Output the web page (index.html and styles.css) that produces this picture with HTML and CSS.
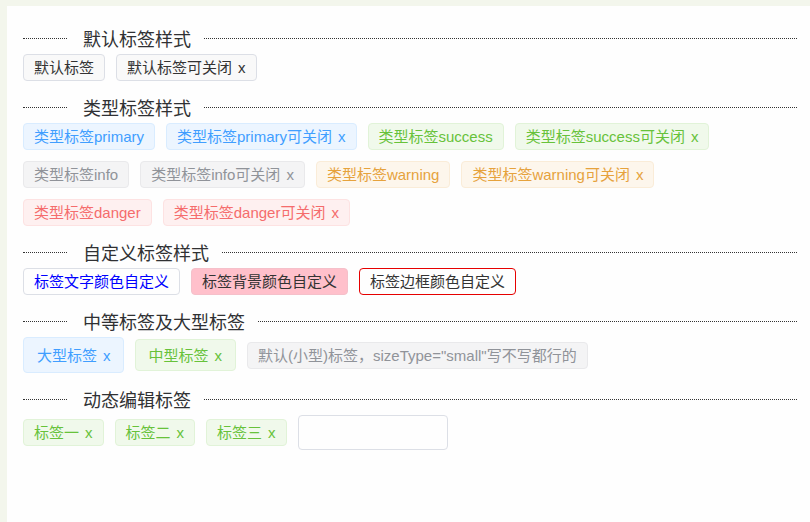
FILE: index.html
```html
<!DOCTYPE html>
<html lang="zh-CN">
<head>
  <meta charset="UTF-8" />
  <title>标签 Tag</title>
  <link rel="stylesheet" href="styles.css">
</head>
<body>

<div class="frame">
  <main class="page">

    <section class="block">
      <h2 class="divider"><span>默认标签样式</span></h2>
      <div class="tags">
        <span class="tag">默认标签</span>
        <span class="tag">默认标签可关闭<i class="close">x</i></span>
      </div>
    </section>

    <section class="block">
      <h2 class="divider"><span>类型标签样式</span></h2>
      <div class="tags">
        <span class="tag primary">类型标签primary</span>
        <span class="tag primary">类型标签primary可关闭<i class="close">x</i></span>
        <span class="tag success">类型标签success</span>
        <span class="tag success">类型标签success可关闭<i class="close">x</i></span>
        <span class="tag info">类型标签info</span>
        <span class="tag info">类型标签info可关闭<i class="close">x</i></span>
        <span class="tag warning">类型标签warning</span>
        <span class="tag warning">类型标签warning可关闭<i class="close">x</i></span>
        <span class="tag danger">类型标签danger</span>
        <span class="tag danger">类型标签danger可关闭<i class="close">x</i></span>
      </div>
    </section>

    <section class="block">
      <h2 class="divider"><span>自定义标签样式</span></h2>
      <div class="tags">
        <span class="tag custom-text">标签文字颜色自定义</span>
        <span class="tag custom-bg">标签背景颜色自定义</span>
        <span class="tag custom-border">标签边框颜色自定义</span>
      </div>
    </section>

    <section class="block">
      <h2 class="divider"><span>中等标签及大型标签</span></h2>
      <div class="tags">
        <span class="tag primary large">大型标签<i class="close">x</i></span>
        <span class="tag success medium">中型标签<i class="close">x</i></span>
        <span class="tag info">默认(小型)标签，sizeType="small"写不写都行的</span>
      </div>
    </section>

    <section class="block">
      <h2 class="divider"><span>动态编辑标签</span></h2>
      <div class="tags">
        <span class="tag success">标签一<i class="close">x</i></span>
        <span class="tag success">标签二<i class="close">x</i></span>
        <span class="tag success">标签三<i class="close">x</i></span>
        <input class="new-tag" type="text" />
      </div>
    </section>

  </main>
</div>

</body>
</html>
```

FILE: styles.css
```css
body {
  margin: 0;
  font-family: "Liberation Sans", "Noto Sans CJK SC", sans-serif;
  color: #333;
  background: #f3f6ec;
}

.frame {
  padding: 6px 0 0 7px;
  height: 516px;
}
.page {
  background: #fefefe;
  height: 100%;
  padding: 22px 13px 0 16px;
  box-sizing: border-box;
}

.block {
  margin-bottom: 16px;
}

/* titre avec ligne pointillée */
.divider {
  display: flex;
  align-items: center;
  height: 20px;
  margin: 0 0 6px;
  font-family: "Noto Sans CJK SC", sans-serif;
  font-size: 18px;
  font-weight: normal;
  color: #303133;
  line-height: 20px;
}
.divider::before,
.divider::after {
  content: "";
  border-top: 1px dotted #333;
}
.divider::before {
  width: 44px;
}
.divider::after {
  flex: 1;
}
.divider span {
  padding: 0 13px 0 16px;
}

.tags {
  display: flex;
  flex-wrap: wrap;
  align-items: center;
  gap: 11px 11px;
  max-width: 760px;
}

.tag {
  display: inline-flex;
  align-items: center;
  height: 27px;
  padding: 0 10px;
  box-sizing: border-box;
  font-size: 15px;
  line-height: 1;
  border: 1px solid #dcdfe6;
  border-radius: 4px;
  background: #f9f9f9;
  color: #333;
  white-space: nowrap;
}
.tag .close {
  font-style: normal;
  margin-left: 6px;
}

.primary { background: #ecf5ff; border-color: #d9ecff; color: #409eff; }
.success { background: #f0f9eb; border-color: #e1f3d8; color: #67c23a; }
.info    { background: #f4f4f5; border-color: #e9e9eb; color: #909399; }
.warning { background: #fdf6ec; border-color: #faecd8; color: #e6a23c; }
.danger  { background: #fef0f0; border-color: #fde2e2; color: #f56c6c; }

.custom-text { background: #fefefe; color: #0000ff; }
.custom-bg { background: #ffc0cb; border-color: #f5c0ca; color: #333; }
.custom-border { background: #fefefe; border-color: #e60000; color: #333; }

.large {
  height: 36px;
  padding: 0 12px 0 13px;
}
.medium {
  height: 32px;
  padding: 0 13px;
}

.new-tag {
  width: 150px;
  height: 35px;
  box-sizing: border-box;
  border: 1px solid #dcdfe6;
  border-radius: 4px;
  background: #fefefe;
  padding: 0 10px;
  font-size: 14px;
  outline: none;
}
```
